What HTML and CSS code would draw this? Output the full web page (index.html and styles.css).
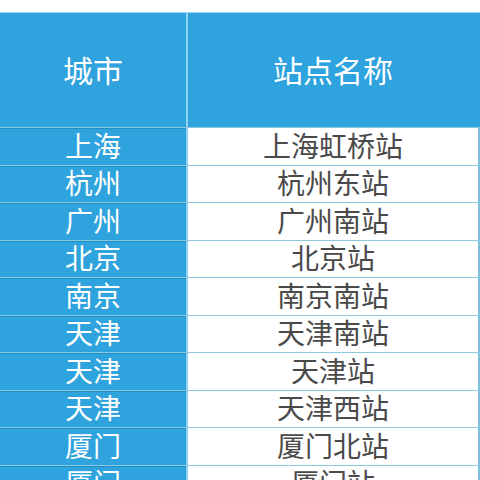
FILE: index.html
```html
<!DOCTYPE html>
<html lang="zh">
<head>
<meta charset="utf-8">
<link rel="stylesheet" href="styles.css">
</head>
<body>
<div class="table">
  <div class="row head">
    <div class="cell city">城市</div>
    <div class="cell station">站点名称</div>
  </div>
  <div class="row"><div class="cell city">上海</div><div class="cell station">上海虹桥站</div></div>
  <div class="row"><div class="cell city">杭州</div><div class="cell station">杭州东站</div></div>
  <div class="row"><div class="cell city">广州</div><div class="cell station">广州南站</div></div>
  <div class="row"><div class="cell city">北京</div><div class="cell station">北京站</div></div>
  <div class="row"><div class="cell city">南京</div><div class="cell station">南京南站</div></div>
  <div class="row"><div class="cell city">天津</div><div class="cell station">天津南站</div></div>
  <div class="row"><div class="cell city">天津</div><div class="cell station">天津站</div></div>
  <div class="row"><div class="cell city">天津</div><div class="cell station">天津西站</div></div>
  <div class="row"><div class="cell city">厦门</div><div class="cell station">厦门北站</div></div>
  <div class="row"><div class="cell city">厦门</div><div class="cell station">厦门站</div></div>
</div>
</body>
</html>
```
FILE: styles.css
```css
html, body {
  margin: 0;
  padding: 0;
  background: #ffffff;
  overflow: hidden;
}
body {
  padding-top: 12px;
  font-family: "Noto Sans CJK SC", "Noto Sans", sans-serif;
}
.table {
  width: 480px;
  border-top: 1px solid #9ad4f0;
}
.row {
  display: flex;
  height: 37.5px;
  box-sizing: border-box;
}
.row + .row {
  border-top: 1px solid #8cc8e2;
}
.head {
  height: 114px;
  background: #2ea3dd;
}
.cell {
  display: flex;
  align-items: center;
  justify-content: center;
  font-size: 28px;
  line-height: 1;
  padding-bottom: 3px;
  box-sizing: border-box;
}
.city {
  width: 188px;
  background: #2ea3dd;
  color: #ffffff;
  border-right: 2px solid #8fd2f2;
}
.station {
  flex: 1;
  background: #ffffff;
  color: #4a4a4a;
  border-right: 2px solid #7fbfdc;
}
.head .cell {
  font-size: 30px;
}
.head .station {
  background: #2ea3dd;
  color: #ffffff;
  border-right: 2px solid #2ea3dd;
}
.head .city {
  border-right: 2px solid #8fd2f2;
}
.row + .row .city {
  box-shadow: inset 0 1px 0 #1f8fc6;
}
```
